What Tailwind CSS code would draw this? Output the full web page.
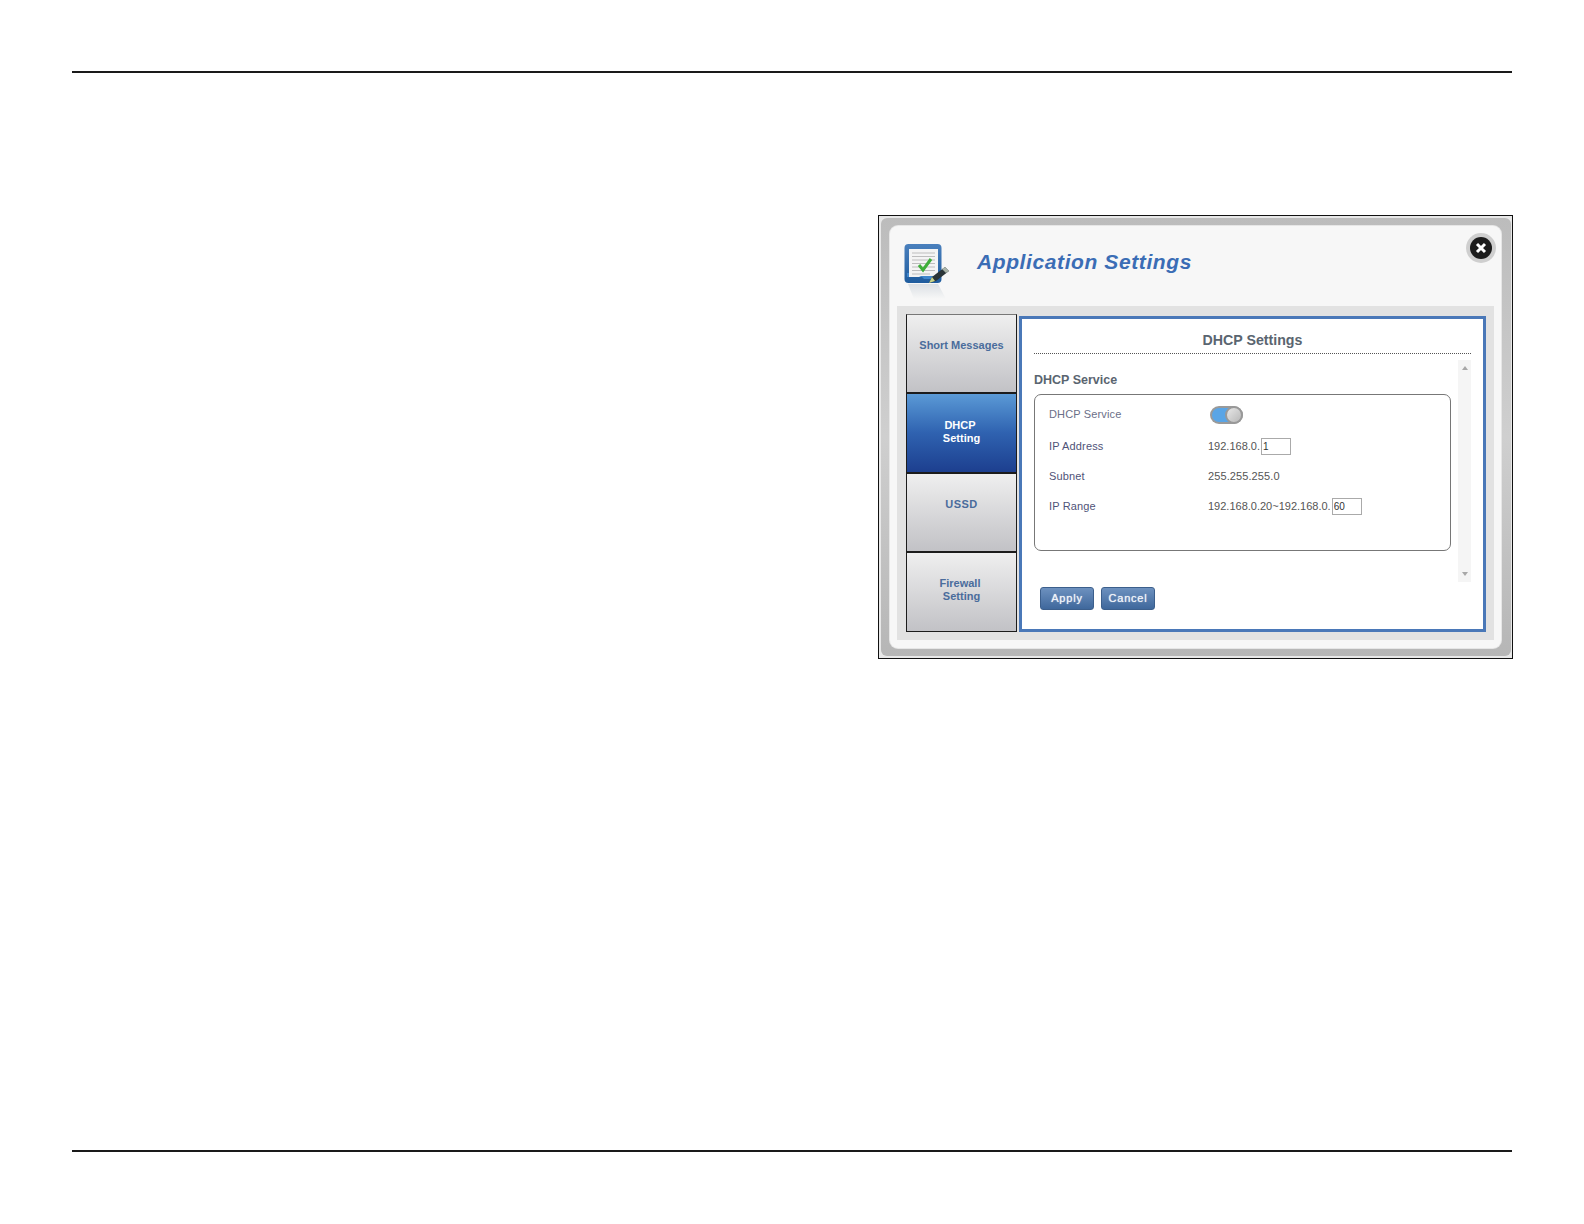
<!DOCTYPE html>
<html lang="en">
<head>
    <meta charset="UTF-8">
    <title>DHCP Settings</title>
    <script src="https://cdn.jsdelivr.net/npm/@tailwindcss/browser@4"></script>
</head>
<body class="bg-white font-['Liberation_Sans',Arial,sans-serif]">
    <div class="flex h-[1224px] flex-col px-[72px] pt-[71px]">
        <div class="h-[2px] w-full bg-[#1a1a1a]"></div>
        <div class="flex flex-1 justify-end pt-[142px]">
            <!-- dialog frame -->
            <div class="mr-[-1px] h-[444px] w-[635px] border border-[#111] bg-[#e8e8e8] pt-[2px] pr-[1px] pb-[2px] pl-[2px]">
                <div class="h-full rounded-[6px] bg-gradient-to-b from-[#bcbcbc] via-[#cfcfcf] to-[#b6b6b6] pt-[8px] pr-[10px] pb-[7px] pl-[9px]">
                    <div class="flex h-[422px] flex-col rounded-[8px] bg-[#f7f7f7] shadow-[0_0_0_1px_#e6e6e6]">
                        <!-- header -->
                        <div class="relative flex h-[80px] shrink-0 items-start pl-[14px] pt-[17px]">
                            <svg class="h-[58px] w-[52px] shrink-0" viewBox="0 0 52 58">
                                <defs>
                                    <linearGradient id="frame" x1="0" y1="0" x2="0" y2="1">
                                        <stop offset="0" stop-color="#4a80bd"/>
                                        <stop offset="1" stop-color="#1f5c9e"/>
                                    </linearGradient>
                                    <linearGradient id="shine" x1="0" y1="0" x2="0" y2="1">
                                        <stop offset="0" stop-color="#cfd6dc"/>
                                        <stop offset="1" stop-color="#f7f7f7"/>
                                    </linearGradient>
                                </defs>
                                <path d="M4 41h30l8 15H10z" fill="url(#shine)" opacity=".7"/>
                                <rect x="0.5" y="1" width="37" height="39" rx="4" fill="url(#frame)"/>
                                <path d="M3 30h31v6H20l-2-2H3z" fill="#3f86cc"/>
                                <path d="M5 6h29v27H17l-2 1H5z" fill="#f4f4f4"/>
                                <path d="M8 10h23M8 13.5h23M8 17h23M8 20.500h23M8 24h23M8 27.500h23M8 31h18" stroke="#bdbdbd" stroke-width="1.2"/>
                                <path d="M15 22l4 5 8-11" fill="none" stroke="#3fae3a" stroke-width="3"/>
                                <path d="M25 40l3-6 13-10 4 4-13 10z" fill="#2b3538"/>
                                <path d="M38 26l3-2 4 4-3 2z" fill="#a9b3a8"/>
                                <path d="M25 40l3-6 3 4z" fill="#c8d48a"/>
                            </svg>
                            <h1 class="ml-[21px] mt-[6px] text-[21px] leading-[26px] font-bold tracking-[0.6px] text-[#3b6db5] italic">Application Settings</h1>
                            <!-- close button -->
                            <div class="absolute top-[7px] right-[5px] flex h-[30px] w-[30px] items-center justify-center rounded-full bg-[#cfcfcf]">
                                <div class="flex h-[22px] w-[22px] items-center justify-center rounded-full bg-[#1c1c1c]">
                                    <svg class="h-[12px] w-[12px]" viewBox="0 0 12 12"><path d="M2 2l8 8M10 2l-8 8" stroke="#fff" stroke-width="3"/></svg>
                                </div>
                            </div>
                        </div>
                        <!-- body -->
                        <div class="mx-[7px] flex h-[334px] gap-[2px] bg-[#e2e2e2] pt-[8px] pl-[9px] pr-[8px]">
                            <div class="flex h-[318px] w-[111px] shrink-0 flex-col border border-[#1c1c1c] border-t-[#777] text-center text-[11px] leading-[13px] font-bold">
                                <div class="flex h-[79px] items-center justify-center border-b-2 border-[#1c1c1c] bg-gradient-to-b from-[#efefef] to-[#c2c2c6] pb-[16px] text-[#4a6c9c]">Short Messages</div>
                                <div class="flex h-[80px] items-center justify-center border-b-2 border-[#1c1c1c] bg-gradient-to-b from-[#5b9ad6] via-[#2f62b0] to-[#1d3f8f] pb-[2px] text-white"><span><span class="mr-[3px]">DHCP</span><br>Setting</span></div>
                                <div class="flex h-[79px] items-center justify-center border-b-2 border-[#1c1c1c] bg-gradient-to-b from-[#efefef] to-[#c2c2c6] pb-[16px] tracking-[0.5px] text-[#4a6c9c]">USSD</div>
                                <div class="flex flex-1 items-center justify-center bg-gradient-to-b from-[#efefef] to-[#c2c2c6] pb-[4px] text-[#4a6c9c]"><span><span class="mr-[3px]">Firewall</span><br>Setting</span></div>
                            </div>
                            <div class="mt-[2px] flex h-[316px] w-[467px] flex-col border-[3px] border-[#4a78b8] bg-white pl-[12px] pr-[12px]">
                                <div class="h-[35px] shrink-0 border-b border-dotted border-[#555] pt-[13px] text-center text-[14.2px] leading-[17px] font-bold text-[#5a6570]">DHCP Settings</div>
                                <div class="flex h-[222px] shrink-0 pt-[6px]">
                                    <div class="w-[417px] shrink-0">
                                        <h2 class="pt-[13px] text-[12.5px] leading-[15px] font-bold text-[#5a6570]">DHCP Service</h2>
                                        <div class="mt-[6px] h-[157px] rounded-[7px] border border-[#777] pl-[14px] pt-[9px] text-[11px]">
                                            <div class="flex h-[20px] items-center">
                                                <span class="w-[160px] tracking-[0.15px] text-[#6b6f88]">DHCP Service</span>
                                                <div class="relative mt-[2px] ml-[1px] h-[18px] w-[33px] rounded-full bg-[#9a9a9a] p-[2px]">
                                                    <div class="h-[14px] w-[24px] rounded-full bg-[#5aa5e6]"></div>
                                                    <div class="absolute top-0 right-0 h-[18px] w-[18px] rounded-full border-2 border-[#999] bg-gradient-to-br from-[#e8e8e8] to-[#b8b8b8]"></div>
                                                </div>
                                            </div>
                                            <div class="mt-[12px] flex h-[20px] items-center text-[#555]">
                                                <span class="w-[159px] tracking-[0.15px] text-[#4f5378]">IP Address</span>
                                                <span>192.168.0.</span>
                                                <input class="ml-[1px] h-[17px] w-[30px] border border-[#aaa] bg-white px-[1px] text-[10px] text-[#333]" value="1">
                                            </div>
                                            <div class="mt-[10px] flex h-[20px] items-center text-[#555]">
                                                <span class="w-[159px] tracking-[0.15px] text-[#4f5378]">Subnet</span>
                                                <span class="tracking-[0.1px]">255.255.255.0</span>
                                            </div>
                                            <div class="mt-[10px] flex h-[20px] items-center text-[#555]">
                                                <span class="w-[159px] tracking-[0.15px] text-[#4f5378]">IP Range</span>
                                                <span>192.168.0.20~192.168.0.</span>
                                                <input class="ml-[1px] h-[17px] w-[30px] border border-[#aaa] bg-white px-[1px] text-[10px] text-[#333]" value="60">
                                            </div>
                                        </div>
                                    </div>
                                    <!-- scrollbar -->
                                    <div class="ml-[7px] flex h-[222px] w-[13px] flex-col items-center justify-between bg-[#f5f5f5] py-[6px]">
                                        <div class="h-0 w-0 border-x-[3px] border-b-[4px] border-x-transparent border-b-[#a8a8a8]"></div>
                                        <div class="h-0 w-0 border-x-[3px] border-t-[4px] border-x-transparent border-t-[#a8a8a8]"></div>
                                    </div>
                                </div>
                                <div class="flex gap-[7px] pt-[11px] pl-[6px] text-[11px] tracking-[0.8px] text-[#f0f3f8]">
                                    <button class="h-[23px] w-[54px] rounded-[3px] border border-[#3c5f8c] bg-gradient-to-b from-[#6d91bf] to-[#3f689c] [text-shadow:0_0_1px_#f0f3f8]">Apply</button>
                                    <button class="h-[23px] w-[54px] rounded-[3px] border border-[#3c5f8c] bg-gradient-to-b from-[#6d91bf] to-[#3f689c] [text-shadow:0_0_1px_#f0f3f8]">Cancel</button>
                                </div>
                            </div>
                        </div>
                    </div>
                </div>
            </div>
        </div>
        <div class="mb-[72px] h-[2px] w-full bg-[#1a1a1a]"></div>
    </div>
</body>
</html>
